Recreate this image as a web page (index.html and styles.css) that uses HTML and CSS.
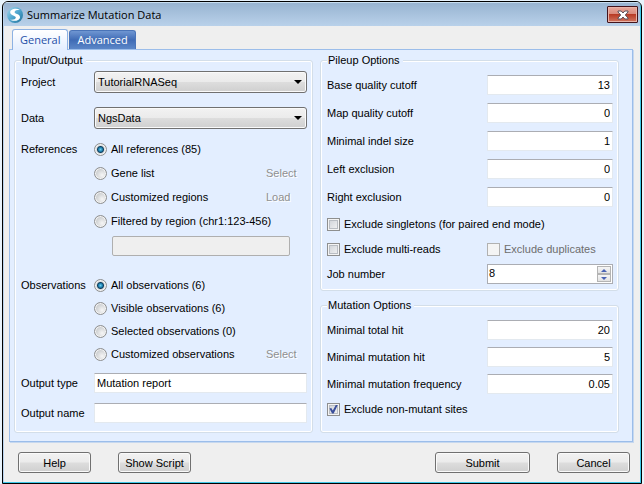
FILE: index.html
```html
<!DOCTYPE html>
<html lang="en">
<head>
<meta charset="utf-8">
<title>Summarize Mutation Data</title>
<link rel="stylesheet" href="styles.css">
</head>
<body>
<main class="window">
  <header class="titlebar">
    <svg class="logo" viewBox="0 0 16 16" aria-hidden="true">
      <defs>
        <linearGradient id="ball" x1="0" y1="0" x2="1" y2="1">
          <stop offset="0" stop-color="#a9d6ea"/>
          <stop offset="0.5" stop-color="#4fa6cf"/>
          <stop offset="1" stop-color="#1f7099"/>
        </linearGradient>
      </defs>
      <circle cx="8" cy="8" r="8" fill="url(#ball)"/>
      <path d="M13 2.800C9.500.600 3.100 1.800 3.200 5.400c.1 3.200 6 3 5.600 5.400-.3 1.700-3 2.300-6 1.700 3.700 2.700 10.300 1.200 10.200-2.600C12.900 6.600 7.400 7 7.600 4.900c.1-1.500 2.700-2.200 5.400-2.100z" fill="#fff"/>
    </svg>
    <h1 class="title">Summarize Mutation Data</h1>
    <button class="close" type="button" aria-label="Close">
      <svg class="close-icon" viewBox="0 0 12 10" aria-hidden="true">
        <path d="M1 1h3.200L6 3 7.800 1H11v1L8.300 5 11 8v1H7.800L6 7 4.200 9H1V8l2.700-3L1 2z" fill="#fff" stroke="#59505a" stroke-width="1"/>
      </svg>
    </button>
  </header>

  <nav class="tabs" role="tablist">
    <button class="tab tab-active" type="button" role="tab" aria-selected="true">General</button>
    <button class="tab" type="button" role="tab" aria-selected="false">Advanced</button>
  </nav>

  <form class="panel">
    <fieldset class="group">
      <legend>Input/Output</legend>
      <div class="row row-project">
        <label class="name" for="project">Project</label>
        <span class="select"><select id="project"><option>TutorialRNASeq</option></select></span>
      </div>
      <div class="row row-data">
        <label class="name" for="data">Data</label>
        <span class="select"><select id="data"><option>NgsData</option></select></span>
      </div>
      <div class="row choices references" role="radiogroup" aria-labelledby="refs">
        <span class="name" id="refs">References</span>
        <div class="options">
          <div class="option"><label><input type="radio" name="refs" checked>All references (85)</label></div>
          <div class="option"><label><input type="radio" name="refs">Gene list</label><button class="link" type="button" disabled>Select</button></div>
          <div class="option"><label><input type="radio" name="refs">Customized regions</label><button class="link" type="button" disabled>Load</button></div>
          <div class="option"><label><input type="radio" name="refs">Filtered by region (chr1:123-456)</label></div>
          <input class="field region" type="text" aria-label="Region" disabled>
        </div>
      </div>
      <div class="row choices observations" role="radiogroup" aria-labelledby="obs">
        <span class="name" id="obs">Observations</span>
        <div class="options">
          <div class="option"><label><input type="radio" name="obs" checked>All observations (6)</label></div>
          <div class="option"><label><input type="radio" name="obs">Visible observations (6)</label></div>
          <div class="option"><label><input type="radio" name="obs">Selected observations (0)</label></div>
          <div class="option"><label><input type="radio" name="obs">Customized observations</label><button class="link" type="button" disabled>Select</button></div>
        </div>
      </div>
      <div class="row row-type">
        <label class="name" for="otype">Output type</label>
        <input class="field" id="otype" type="text" value="Mutation report">
      </div>
      <div class="row row-output">
        <label class="name" for="oname">Output name</label>
        <input class="field" id="oname" type="text">
      </div>
    </fieldset>

    <div class="column">
      <fieldset class="group">
        <legend>Pileup Options</legend>
        <div class="numbers">
          <div class="setting"><label for="base">Base quality cutoff</label><input class="field number" id="base" type="text" value="13"></div>
          <div class="setting"><label for="map">Map quality cutoff</label><input class="field number" id="map" type="text" value="0"></div>
          <div class="setting"><label for="indel">Minimal indel size</label><input class="field number" id="indel" type="text" value="1"></div>
          <div class="setting"><label for="left">Left exclusion</label><input class="field number" id="left" type="text" value="0"></div>
          <div class="setting"><label for="right">Right exclusion</label><input class="field number" id="right" type="text" value="0"></div>
        </div>
        <div class="checks">
          <label><input type="checkbox">Exclude singletons (for paired end mode)</label>
          <div class="setting">
            <label><input type="checkbox">Exclude multi-reads</label>
            <label class="duplicates"><input type="checkbox" disabled>Exclude duplicates</label>
          </div>
        </div>
        <div class="setting">
          <label for="jobs">Job number</label>
          <span class="spinner">
            <input id="jobs" type="number" value="8">
            <span class="arrows">
              <button class="arrow up" type="button" aria-label="Increase"></button>
              <button class="arrow down" type="button" aria-label="Decrease"></button>
            </span>
          </span>
        </div>
      </fieldset>

      <fieldset class="group group-fill">
        <legend>Mutation Options</legend>
        <div class="numbers">
          <div class="setting"><label for="total">Minimal total hit</label><input class="field number" id="total" type="text" value="20"></div>
          <div class="setting"><label for="hit">Minimal mutation hit</label><input class="field number" id="hit" type="text" value="5"></div>
          <div class="setting"><label for="freq">Minimal mutation frequency</label><input class="field number" id="freq" type="text" value="0.05"></div>
        </div>
        <label><input type="checkbox" checked>Exclude non-mutant sites</label>
      </fieldset>
    </div>
  </form>

  <footer class="actions">
    <button class="button" type="button">Help</button>
    <button class="button" type="button">Show Script</button>
    <button class="button submit" type="button">Submit</button>
    <button class="button" type="button">Cancel</button>
  </footer>
</main>
</body>
</html>
```
FILE: styles.css
```css
* {
  box-sizing: border-box;
}

body {
  margin: 0;
  padding: 1px 2px;
  background: #e8f3fc;
  color: #000;
  font: 11px/14px "Liberation Sans", Arial, sans-serif;
}

button,
input,
select {
  margin: 0;
  font: inherit;
  color: inherit;
}

.window {
  display: flex;
  flex-direction: column;
  overflow: hidden;
  background: #efefef;
  border: 1px solid #000;
  border-radius: 6px 6px 0 0;
  box-shadow: inset -1px -1px #3fc8e8, inset 1px 0 #b9d3ee;
}

/* Title bar */
.titlebar {
  display: flex;
  align-items: center;
  height: 24px;
  margin: 0 1px;
  padding: 0 2px 0 3px;
  background: linear-gradient(#98b4d1, #b9d1ea);
  border-top: 1px solid #c8def0;
}

.logo {
  width: 16px;
  height: 16px;
}

.title {
  flex: 1;
  margin: 0 0 0 4px;
  font: 11px/16px "Open Sans", "Noto Sans", sans-serif;
}

.close {
  display: flex;
  align-items: center;
  justify-content: center;
  width: 31px;
  height: 17px;
  padding: 0;
  background: linear-gradient(#e9a99c, #d98a7c 45%, #b83b25 50%, #d0755f);
  border: 1px solid #43141c;
  border-radius: 1px;
  box-shadow: inset 0 0 0 1px #e8b3a8;
}

.close-icon {
  width: 12px;
  height: 10px;
}

/* Tabs */
.tabs {
  display: flex;
  align-items: flex-end;
  gap: 1px;
  height: 23px;
  padding: 0 9px;
}

.tab {
  height: 19px;
  padding: 0 7px;
  background: linear-gradient(#6f96d2, #3f6bb5 50%, #5c87c8);
  border: 1px solid #4a74b8;
  border-bottom: 0;
  border-radius: 3px 3px 0 0;
  color: #fff;
  font: 11px/18px "Open Sans", "Noto Sans", sans-serif;
}

.tab-active {
  position: relative;
  z-index: 1;
  height: 21px;
  margin-bottom: -1px;
  background: linear-gradient(#fff, #e3eeff);
  border-color: #8db2e3;
  color: #1e4fa8;
}

/* Panel and groups */
.panel {
  display: grid;
  grid-template-columns: 1fr 1fr;
  gap: 7px;
  margin: 0 8px 0 6px;
  padding: 3px 13px 8px 4px;
  background: #e3eeff;
  border: 1px solid #9bbdea;
  box-shadow: 1px 1px #c6d8ef;
}

.column {
  display: flex;
  flex-direction: column;
  gap: 7px;
}

.group {
  min-width: 0;
  margin: 0;
  padding: 0 5px 6px 6px;
  border: 1px solid #d3dee9;
  border-radius: 3px;
  box-shadow: inset 0 0 0 1px #fff;
}

.group-fill {
  flex: 1;
}

legend {
  padding: 0 3px 0 1px;
  background: #e3eeff;
}

.row {
  display: flex;
  align-items: center;
}

.name {
  flex: none;
  width: 73px;
}

.row-project {
  margin-top: 4px;
}

.row-data {
  margin-top: 14px;
}

.row-type {
  margin-top: 7px;
}

.row-output {
  margin: 10px 0 3px;
}

.choices {
  align-items: flex-start;
}

.options {
  flex: 1;
}

.option {
  display: flex;
  align-items: center;
}

.option label {
  flex: 1;
}

.references {
  margin-top: 8px;
}

.references > .name,
.references .option {
  height: 24px;
  line-height: 24px;
}

.observations {
  margin-top: 18px;
}

.observations > .name,
.observations .option {
  height: 23px;
  line-height: 23px;
}

label:has(input) {
  display: flex;
  align-items: center;
  gap: 4px;
}

.link {
  width: 41px;
  padding: 0;
  background: none;
  border: 0;
  color: #8f8f8f;
  text-align: left;
  text-shadow: 1px 1px #fff;
}

/* Form controls */
.field {
  flex: 1;
  min-width: 0;
  height: 20px;
  padding: 0 4px 0 2px;
  background: #fff;
  border: 1px solid #e3e9ef;
  border-top-color: #abadb3;
  border-radius: 1px;
}

.region {
  display: block;
  width: calc(100% - 35px);
  margin: 3px 0 0 18px;
  background: #efefef;
  border-color: #afafaf;
  border-radius: 2px;
}

.number {
  flex: none;
  width: 126px;
  padding: 0 2px;
  text-align: right;
}

.select {
  position: relative;
  flex: 1;
}

.select::after {
  content: "";
  position: absolute;
  top: 9px;
  right: 5px;
  border: 4px solid transparent;
  border-top-color: #000;
  border-bottom: 0;
  pointer-events: none;
}

.select select {
  appearance: none;
  display: block;
  width: 100%;
  height: 22px;
  padding: 0 3px;
  background: linear-gradient(#f2f2f2, #ebebeb 48%, #dddddd 52%, #cfcfcf);
  border: 1px solid #707070;
  border-radius: 3px;
  box-shadow: inset 0 0 0 1px #fafafa;
}

input[type="radio"] {
  appearance: none;
  width: 13px;
  height: 13px;
  background: radial-gradient(circle at 65% 65%, #f6f6f6, #cfd1d3 60%);
  border: 1px solid #8e8f8f;
  border-radius: 50%;
  box-shadow: inset 0 0 0 1px #f4f4f4;
}

input[type="radio"]:checked {
  background: radial-gradient(circle at 50% 50%, #6fd0f0 0, #1d7fae 2px, #123f5e 3px, #d8dcdf 4px);
}

input[type="checkbox"] {
  appearance: none;
  display: grid;
  place-items: center;
  width: 13px;
  height: 13px;
  background: linear-gradient(135deg, #cbcfd5, #f6f6f6);
  border: 1px solid #8e8f8f;
  box-shadow: inset 0 0 0 1px #f4f4f4, inset 0 0 0 2px #b9bdc3;
}

input[type="checkbox"]:checked::before {
  content: "";
  width: 9px;
  height: 9px;
  background: #3b4f9b;
  clip-path: polygon(5% 45%, 25% 40%, 42% 66%, 78% 0, 100% 0, 52% 100%, 34% 100%);
}

input[type="checkbox"]:disabled {
  background: #f4f4f4;
  border-color: #b1b1b1;
  box-shadow: none;
}

.numbers {
  display: grid;
  gap: 8px;
  margin: 8px 0 10px;
}

.group-fill .numbers {
  gap: 7px;
  margin-bottom: 8px;
}

.setting {
  display: flex;
  align-items: center;
  justify-content: space-between;
}

.checks {
  display: grid;
  gap: 11px;
  margin-bottom: 8px;
}

.duplicates {
  width: 126px;
  color: #6d6d6d;
}

.spinner {
  display: flex;
  width: 126px;
  height: 20px;
  padding: 1px;
  background: #fff;
  border: 1px solid #abadb3;
}

.spinner input {
  flex: 1;
  min-width: 0;
  padding: 0 0 3px;
  background: none;
  border: 0;
  appearance: textfield;
}

.spinner input::-webkit-inner-spin-button {
  display: none;
}

.arrows {
  display: grid;
  grid-template-rows: 1fr 1fr;
  width: 14px;
}

.arrow {
  display: grid;
  place-items: center;
  padding: 0;
  background: linear-gradient(#f6f6f6, #e2e2e2);
  border: 1px solid #b4b4b4;
}

.arrow::before {
  content: "";
  border: 3px solid transparent;
}

.up::before {
  border-top: 0;
  border-bottom-color: #4a63b4;
}

.down::before {
  border-bottom: 0;
  border-top-color: #4a63b4;
}

/* Footer */
.actions {
  display: flex;
  gap: 27px;
  padding: 10px 11px 10px 15px;
}

.button {
  width: 73px;
  height: 21px;
  padding: 0;
  background: linear-gradient(#f2f2f2, #ebebeb 48%, #dddddd 52%, #cfcfcf);
  border: 1px solid #707070;
  border-radius: 3px;
  box-shadow: inset 0 0 0 1px #fafafa;
}

.submit {
  width: 95px;
  margin-left: auto;
}
```
